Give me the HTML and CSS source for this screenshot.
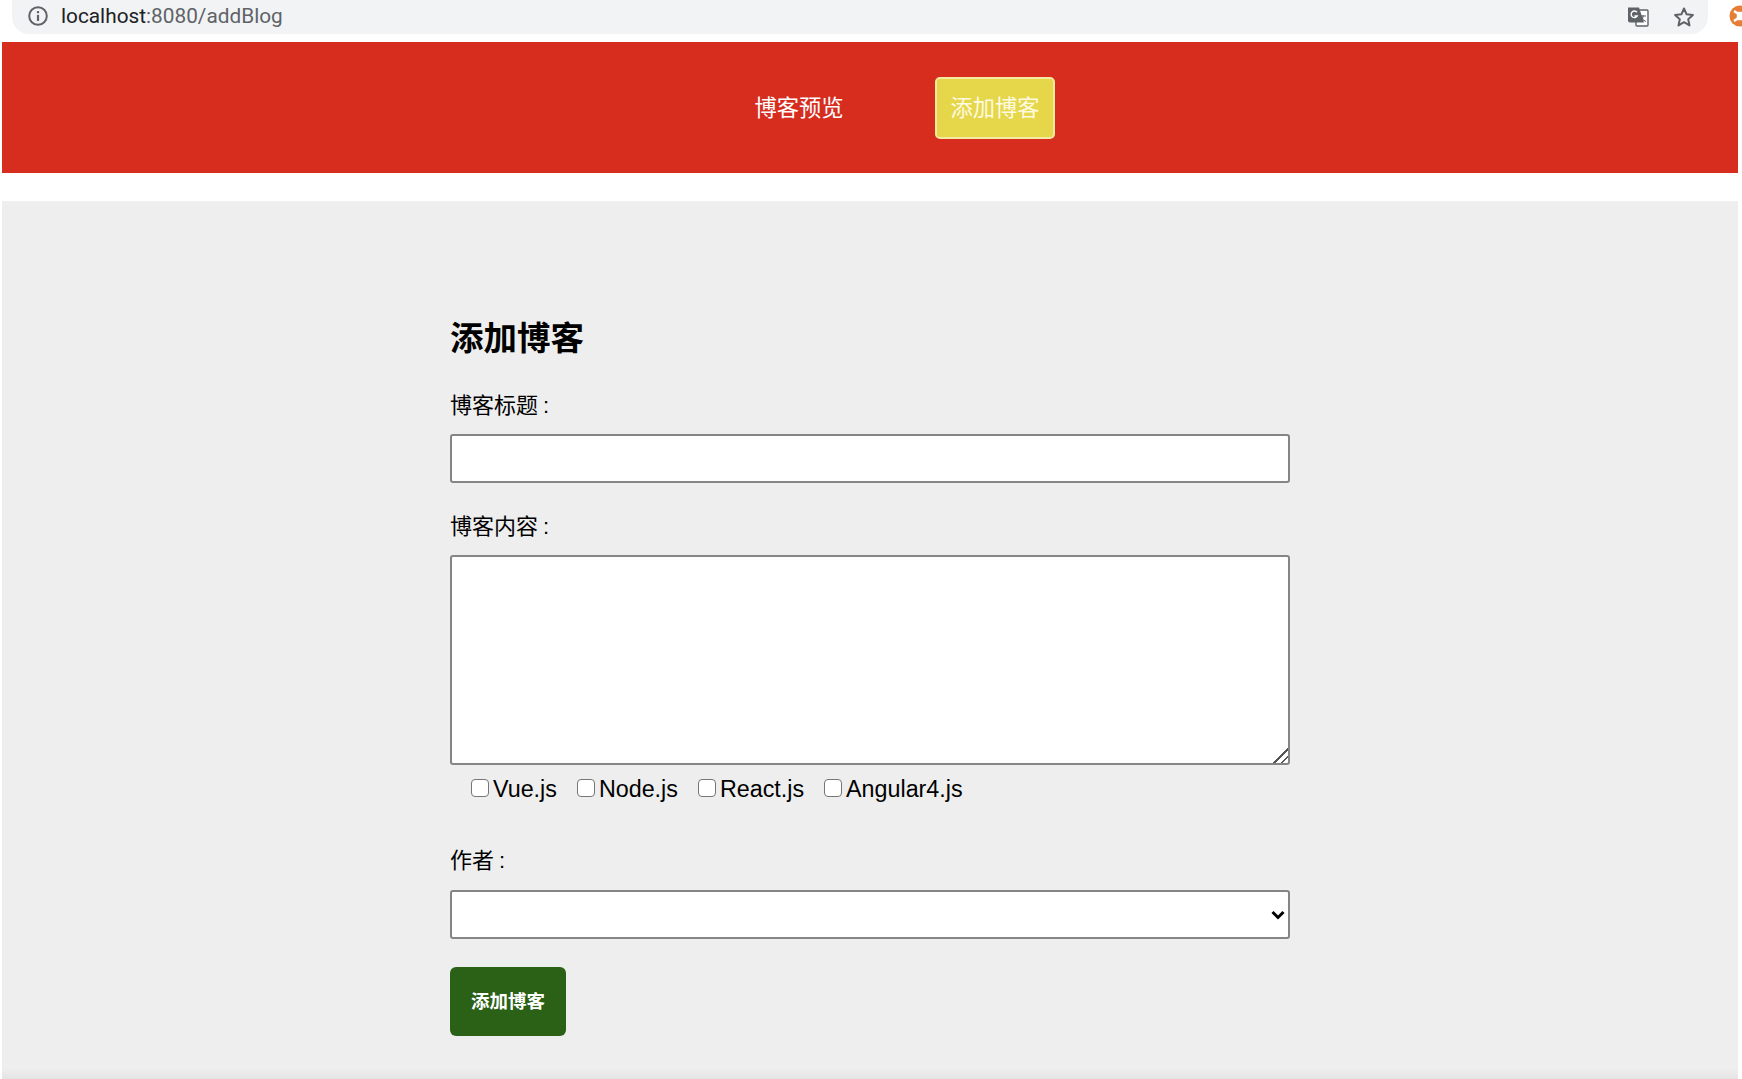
FILE: index.html
```html
<!DOCTYPE html>
<html lang="zh-CN">
<head>
<meta charset="utf-8">
<title>addBlog</title>
<link rel="stylesheet" href="styles.css">
</head>
<body>
<div class="chrome">
  <div class="omnibox">
    <svg class="info" width="22" height="22" viewBox="0 0 20 20"><circle cx="10" cy="10" r="8" fill="none" stroke="#5f6368" stroke-width="1.8"/><rect x="9" y="9" width="2" height="5.5" fill="#5f6368"/><rect x="9" y="5.5" width="2" height="2" fill="#5f6368"/></svg>
    <div class="url"><span class="host">localhost</span>:8080/addBlog</div>
    <svg class="translate" width="22" height="22" viewBox="0 0 22 22"><rect x="9" y="4" width="12" height="16" rx="1" fill="#fff" stroke="#5f6368" stroke-width="1.4"/><path d="M1 1.5h11l5 15H3a2 2 0 0 1-2-2z" fill="#5f6368"/><path d="M10 6.2A3.3 3.3 0 1 0 10.3 10H7.4" fill="none" stroke="#fff" stroke-width="1.4"/><path d="M13 10h6M16 9v1.5c0 2-1.5 4-3 5M14.500 12c1 1.500 2.500 2.800 4.300 3.500" fill="none" stroke="#5f6368" stroke-width="1.100"/></svg>
    <svg class="star" width="22" height="22" viewBox="0 0 22 22"><path d="M11 2.500l2.600 5.800 6.300.7-4.700 4.200 1.300 6.200L11 16.200 5.500 19.400l1.300-6.200L2.100 9l6.300-.7z" fill="none" stroke="#5f6368" stroke-width="2" stroke-linejoin="round"/></svg>
  </div>
  <svg class="ext" width="13" height="22" viewBox="0 0 13 22"><circle cx="11" cy="11" r="10.500" fill="#e67e35"/><path d="M5 6l6 4M5 16l6-4M9 8h4v6H9z" stroke="#fff" stroke-width="2.500" fill="#fff"/></svg>
</div>

<header class="topbar">
  <nav class="nav">
    <a class="nav-link">博客预览</a>
    <a class="nav-link active">添加博客</a>
  </nav>
</header>

<main class="content">
  <form class="blog-form">
    <h2 class="title">添加博客</h2>
    <label class="field-label label-first">博客标题<span class="colon">:</span></label>
    <input class="control text-input" type="text">
    <label class="field-label">博客内容<span class="colon">:</span></label>
    <textarea class="control text-area"></textarea>
    <div class="checks">
      <label class="check"><input type="checkbox">Vue.js</label>
      <label class="check"><input type="checkbox">Node.js</label>
      <label class="check"><input type="checkbox">React.js</label>
      <label class="check"><input type="checkbox">Angular4.js</label>
    </div>
    <label class="field-label label-author">作者<span class="colon">:</span></label>
    <div class="select-wrap">
      <select class="control select"><option></option></select>
      <svg class="chevron" width="14" height="10" viewBox="0 0 14 10"><path d="M1.500 2l5.500 5.500L12.500 2" fill="none" stroke="#000" stroke-width="3"/></svg>
    </div>
    <button class="submit" type="button">添加博客</button>
  </form>
</main>
</body>
</html>
```
FILE: styles.css
```css
* { box-sizing: border-box; }
html, body { margin: 0; height: 100%; }
body {
  display: flex;
  flex-direction: column;
  height: 1079px;
  overflow: hidden;
  padding: 0 4px 0 2px;
  background: #fff;
  font-family: "Liberation Sans", "Noto Sans CJK SC", sans-serif;
  color: #000;
}
.chrome {
  flex: none;
  display: flex;
  align-items: flex-start;
  height: 42px;
  margin: 0 -4px 0 -2px;
  padding-left: 12px;
}
.omnibox {
  flex: none;
  width: 1696px;
  height: 34px;
  display: flex;
  align-items: center;
  padding: 0 13px 0 15px;
  background: #f1f3f4;
  border-radius: 0 0 17px 17px;
}
.info { flex: none; margin-right: 12px; position: relative; top: -1px; }
.url {
  flex: 1;
  font-family: "Roboto", sans-serif;
  font-size: 20.800px;
  line-height: 32px;
  margin-bottom: 2px;
  color: #5f6368;
}
.host { color: #202124; }
.translate { flex: none; margin-right: 24px; }
.star { flex: none; }
.ext { flex: none; margin: 5px 0 0 21px; }

.topbar {
  flex: none;
  height: 131px;
  background: #d62d1f;
  display: flex;
  align-items: center;
  justify-content: center;
}
.nav { display: flex; align-items: center; gap: 76px; margin-left: 54px; }
.nav-link {
  display: block;
  width: 120px;
  height: 62px;
  line-height: 62px;
  text-align: center;
  font-size: 22.300px;
  color: #fff;
  border: 1px solid transparent;
  border-radius: 5px;
}
.nav-link.active {
  background: #e5d64a;
  border: 2px solid #f3e9a0;
  line-height: 60px;
  color: #fffbe0;
}

.content {
  flex: 1;
  margin-top: 28px;
  background: #eee;
  padding: 120px 0 0 448px;
  box-shadow: inset 0 -14px 12px -12px rgba(0, 0, 0, .07);
}
.blog-form { width: 841px; display: flex; flex-direction: column; align-items: flex-start; }
.title {
  margin: 0;
  font-size: 33.500px;
  line-height: 36px;
  font-weight: 700;
}
.field-label {
  display: block;
  margin-top: 31px;
  font-size: 22px;
  line-height: 26px;
}
.colon { margin-left: 5px; }
.label-first { margin-top: 36px; }
.label-author { margin-top: 46px; }
.control {
  display: block;
  width: 840px;
  margin: 15px 0 0;
  background: #fff;
  border: 2px solid #858585;
  border-radius: 3px;
  font-family: inherit;
}
.text-input { height: 49px; }
.text-area { height: 210px; resize: vertical; }
.text-area::-webkit-resizer {
  background: linear-gradient(135deg, transparent 50%, #555 50%, #555 57%, transparent 57%, transparent 74%, #555 74%, #555 81%, transparent 81%);
}
.checks {
  display: flex;
  gap: 20px;
  margin-top: 11px;
  padding-left: 21px;
  height: 26px;
}
.check {
  display: flex;
  align-items: center;
  font-size: 23.300px;
  line-height: 26px;
}
.check input {
  appearance: none;
  width: 18px;
  height: 18px;
  margin: 0 4px 3px 0;
  background: #fff;
  border: 1px solid #767676;
  border-radius: 4px;
}
.select-wrap { position: relative; width: 840px; }
.select { height: 49px; margin-top: 16px; appearance: none; }
.chevron { position: absolute; right: 5px; top: 36px; }
.submit {
  width: 116px;
  height: 69px;
  margin-top: 28px;
  padding-bottom: 4px;
  background: #2b6017;
  color: #fff;
  border: 0;
  border-radius: 6px;
  font-family: inherit;
  font-size: 18.500px;
  font-weight: 700;
}
```
